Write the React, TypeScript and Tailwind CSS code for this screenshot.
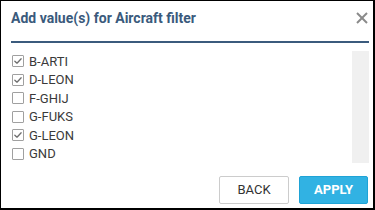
const items = [
  { label: "B-ARTI", checked: true },
  { label: "D-LEON", checked: true },
  { label: "F-GHIJ", checked: false },
  { label: "G-FUKS", checked: false },
  { label: "G-LEON", checked: true },
  { label: "GND", checked: false },
];

function Checkbox({ checked }: { checked: boolean }) {
  return (
    <span className="w-[12px] h-[12px] border border-[#a0a0a0] rounded-[1px] bg-white flex items-center justify-center shrink-0">
      {checked && (
        <svg viewBox="0 0 12 12" className="w-[10px] h-[10px]" fill="none" stroke="#6f6f6f" strokeWidth="1.6" strokeLinecap="round" strokeLinejoin="round">
          <polyline points="2.2,6.2 4.8,8.6 9.8,3.4" />
        </svg>
      )}
    </span>
  );
}

export default function App() {
  return (
    <div
      className="w-[375px] h-[210px] bg-white border-l border-t border-r-2 border-b-2 border-black pl-[10px] pr-[4px] flex flex-col"
      style={{ fontFamily: "Roboto, 'Liberation Sans', sans-serif" }}
    >
      {/* header */}
      <div className="h-[40px] flex items-start justify-between pt-[7px] pr-[1px]">
        <h2 className="text-[14px] leading-[20px] font-bold text-[#3a5a7c]">Add value(s) for Aircraft filter</h2>
        <button className="mt-[4px] w-[12px] h-[12px] flex items-center justify-center">
          <svg viewBox="0 0 12 12" className="w-[12px] h-[12px]" stroke="#8a8a8a" strokeWidth="2">
            <line x1="1" y1="1" x2="11" y2="11" />
            <line x1="11" y1="1" x2="1" y2="11" />
          </svg>
        </button>
      </div>
      <div className="h-[2px] bg-[#3b5b7d]" />

      {/* list */}
      <div className="mt-[8px] h-[112px] flex">
        <ul className="flex-1 flex flex-col pt-[1px]">
          {items.map((it) => (
            <li key={it.label} className="h-[19.4px] flex items-center gap-[5px] pl-[1px]">
              <Checkbox checked={it.checked} />
              <span className="text-[13px] leading-none text-[#3a3a3a]">{it.label}</span>
            </li>
          ))}
        </ul>
        <div className="w-[17px] bg-[#f0f0f0]" />
      </div>

      {/* footer */}
      <div className="mt-[13px] flex justify-end gap-[10px] pr-[1px]">
        <button className="w-[70px] h-[28px] border border-[#cccccc] rounded-[2px] bg-white text-[13px] text-[#333333]">
          BACK
        </button>
        <button className="w-[69px] h-[28px] border border-[#1fa3d6] rounded-[2px] bg-[#31b2e3] text-[13px] font-bold text-white">
          APPLY
        </button>
      </div>
    </div>
  );
}
